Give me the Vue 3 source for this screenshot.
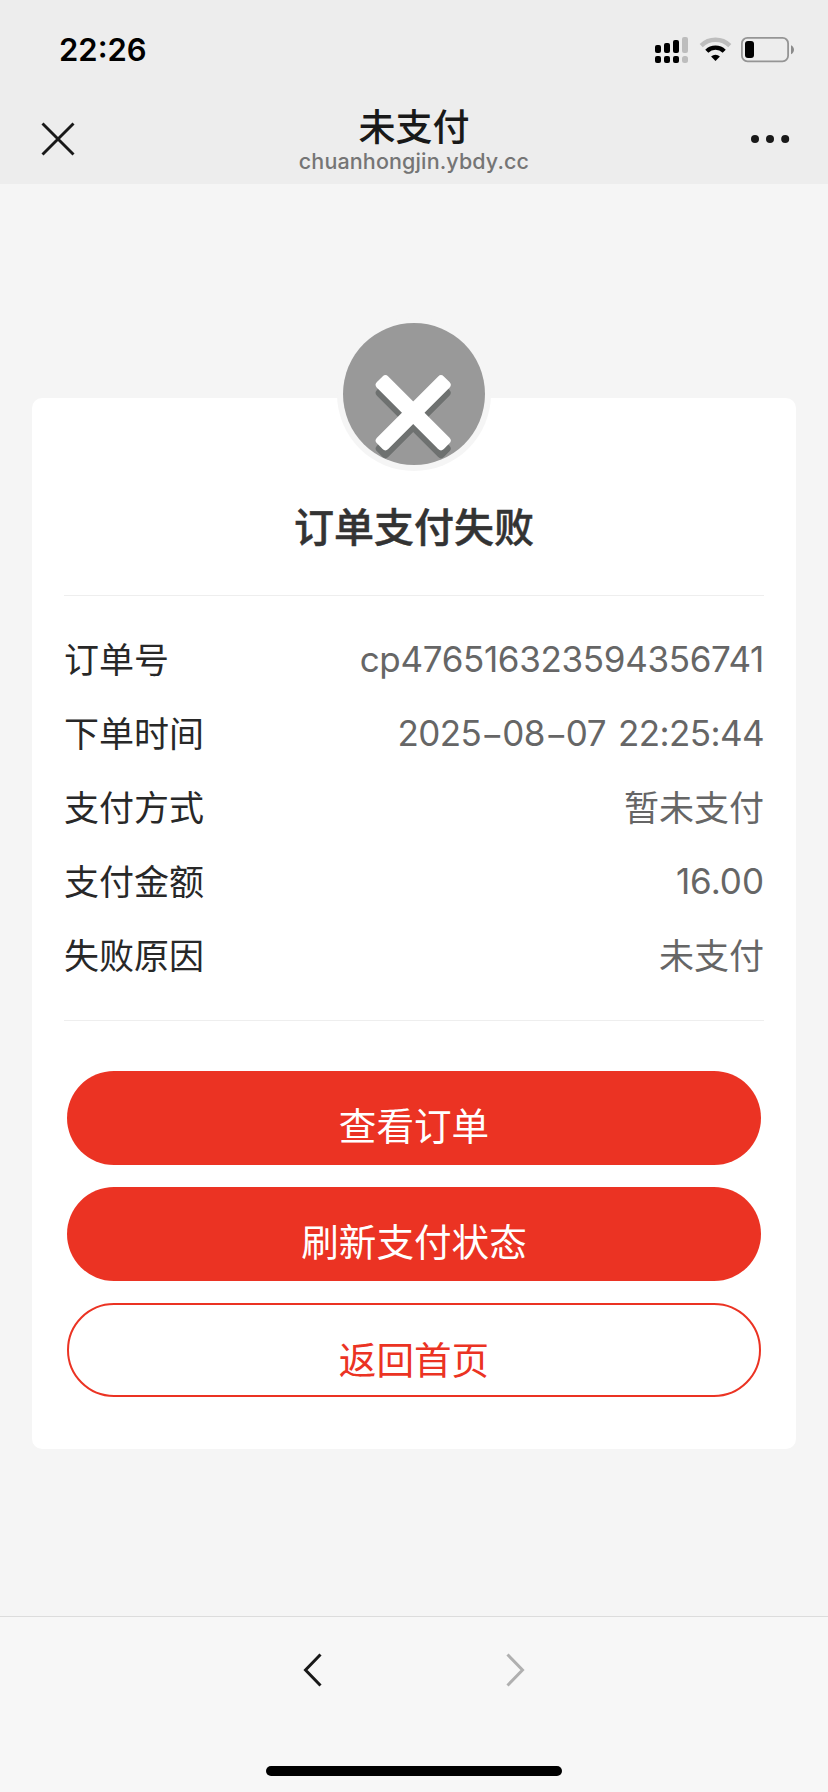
<script setup>
const rows = [
  { label: '订单号', value: ['cp476516323594356741'], kind: 'code' },
  { label: '下单时间', value: ['2025', '-', '08', '-', '07 22:25:44'], kind: 'date' },
  { label: '支付方式', value: ['暂未支付'], kind: 'text' },
  { label: '支付金额', value: ['16.00'], kind: 'amount' },
  { label: '失败原因', value: ['未支付'], kind: 'text' },
]
</script>

<template>
  <div class="screen">
    <header class="header">
      <div class="status">
        <span class="time">22:26</span>
        <svg class="indicators" width="140" height="28" viewBox="0 0 140 28">
          <g fill="#000">
            <rect x="0" y="9" width="6" height="8" rx="2" />
            <rect x="9" y="7" width="6" height="10" rx="2" />
            <rect x="18" y="4" width="6" height="13" rx="2" />
            <rect x="0" y="20" width="6" height="7" rx="2" />
            <rect x="9" y="20" width="6" height="7" rx="2" />
            <rect x="18" y="20" width="6" height="7" rx="2" />
          </g>
          <g fill="#bdbdbd">
            <rect x="27" y="1" width="6" height="16" rx="2" />
            <rect x="27" y="20" width="6" height="7" rx="2.5" />
          </g>
          <path d="M46.2 9.6a20.4 20.4 0 0 1 28.6 0" fill="none" stroke="#bdbdbd" stroke-width="4.4" />
          <path d="M51.8 15.2a12.4 12.4 0 0 1 17.4 0" fill="none" stroke="#000" stroke-width="4.4" />
          <path d="M60.5 25l-4.4-4.6a6.4 6.4 0 0 1 8.8 0z" fill="#000" />
          <rect x="86.9" y="1.9" width="46.2" height="23.4" rx="5.5" fill="none" stroke="#959595" stroke-width="1.8" />
          <rect x="90" y="5" width="9" height="17" rx="3" fill="#000" />
          <path d="M136 9.3c4 1.7 4 7.3 0 9z" fill="#8b8b8b" />
        </svg>
      </div>
      <div class="nav">
        <svg class="close" width="34" height="34" viewBox="0 0 34 34">
          <path d="M1.5 1.5l31 31M32.5 1.5l-31 31" stroke="#191919" stroke-width="2.9" />
        </svg>
        <div class="heading">
          <span class="title">未支付</span>
          <span class="host">chuanhongjin.ybdy.cc</span>
        </div>
        <svg class="more" width="40" height="10" viewBox="0 0 40 10">
          <g fill="#191919">
            <circle cx="5" cy="5" r="4" />
            <circle cx="20" cy="5" r="4" />
            <circle cx="35.2" cy="5" r="4" />
          </g>
        </svg>
      </div>
    </header>

    <main class="content">
      <section class="card">
        <svg class="badge" width="154" height="154" viewBox="0 0 154 154">
          <defs>
            <clipPath id="disc"><circle cx="77" cy="77" r="71" /></clipPath>
          </defs>
          <circle cx="77" cy="77" r="77" fill="#f5f5f5" />
          <circle cx="77" cy="77" r="71" fill="#999" />
          <g clip-path="url(#disc)">
            <g transform="translate(76.2 103.7)" fill="#6e7170">
              <rect x="-47.3" y="-8" width="94.6" height="16" rx="4" transform="rotate(45)" />
              <rect x="-47.3" y="-8" width="94.6" height="16" rx="4" transform="rotate(-45)" />
            </g>
            <g transform="translate(76.2 95.7)" fill="#fff">
              <rect x="-47.3" y="-8" width="94.6" height="16" rx="4" transform="rotate(45)" />
              <rect x="-47.3" y="-8" width="94.6" height="16" rx="4" transform="rotate(-45)" />
            </g>
          </g>
        </svg>
        <h1>订单支付失败</h1>
        <dl class="details">
          <div v-for="row in rows" :key="row.label" class="row">
            <dt>{{ row.label }}</dt>
            <dd :class="row.kind"><span v-for="(part, i) in row.value" :key="i" :class="{ dash: part === '-' }">{{ part }}</span></dd>
          </div>
        </dl>
        <div class="actions">
          <button type="button" class="btn">查看订单</button>
          <button type="button" class="btn">刷新支付状态</button>
          <button type="button" class="btn outline">返回首页</button>
        </div>
      </section>
    </main>

    <footer class="toolbar">
      <div class="arrows">
        <svg width="20" height="36" viewBox="0 0 20 36">
          <path d="M17.5 2.5L2.5 18l15 15.5" fill="none" stroke="#191919" stroke-width="3" />
        </svg>
        <svg width="20" height="36" viewBox="0 0 20 36">
          <path d="M2.5 2.5l15 15.5l-15 15.5" fill="none" stroke="#b0b0b0" stroke-width="3" />
        </svg>
      </div>
      <div class="home-bar"></div>
    </footer>
  </div>
</template>

<style>
body {
  margin: 0;
}
</style>

<style scoped>
.screen {
  width: 828px;
  height: 1792px;
  display: flex;
  flex-direction: column;
  background: #f5f5f5;
  font-family: Inter, "Noto Sans CJK SC", sans-serif;
  overflow: hidden;
}
.header {
  height: 184px;
  background: #ededed;
}
.status {
  height: 100px;
  box-sizing: border-box;
  padding: 0 33px 0 59px;
  display: flex;
  align-items: center;
  justify-content: space-between;
}
.time {
  font-size: 31px;
  font-weight: 600;
  line-height: 40px;
  color: #000;
}
.nav {
  height: 84px;
  box-sizing: border-box;
  padding: 0 38px 0 41px;
  display: grid;
  grid-template-columns: 60px 1fr 63px;
}
.close {
  margin-top: 22px;
}
.more {
  margin-top: 34px;
  justify-self: end;
}
.heading {
  display: flex;
  flex-direction: column;
  align-items: center;
}
.title {
  margin-top: 6px;
  font-size: 37px;
  font-weight: 500;
  line-height: 44px;
  color: #191919;
}
.host {
  margin-top: -2px;
  font-size: 21.5px;
  font-weight: 500;
  line-height: 26px;
  letter-spacing: 0.12px;
  color: #757575;
}
.content {
  flex: 1;
  padding: 214px 32px 0;
}
.card {
  position: relative;
  height: 1051px;
  box-sizing: border-box;
  padding: 103px 32px 0;
  border-radius: 10px;
  background: #fff;
}
.badge {
  position: absolute;
  top: -81px;
  left: 305px;
}
h1 {
  margin: 0;
  height: 94px;
  font-size: 40px;
  font-weight: 500;
  line-height: 54px;
  text-align: center;
  color: #333;
  -webkit-text-stroke: 0.5px #333;
}
.details {
  margin: 0;
  height: 398px;
  padding-top: 26px;
  border-top: 1px solid #eee;
  border-bottom: 1px solid #eee;
}
.row {
  height: 74px;
  display: flex;
  align-items: center;
  justify-content: space-between;
  font-size: 35px;
  line-height: 50px;
}
dt {
  padding-top: 2px;
  color: #282828;
}
dd {
  margin: 0;
  color: #666;
}
.text {
  padding-top: 2px;
}
.code {
  letter-spacing: -0.33px;
}
.date {
  letter-spacing: -0.6px;
  word-spacing: 3px;
}
.dash {
  display: inline-block;
  margin: 0 2.8px;
  transform: translateY(1px) scaleX(1.4);
}
.actions {
  padding: 50px 3px 0;
  display: flex;
  flex-direction: column;
  gap: 22px;
}
.btn {
  height: 94px;
  box-sizing: border-box;
  padding: 18px 0 0;
  border: 0;
  border-radius: 47px;
  background: #eb3323;
  color: #fff;
  font: inherit;
  font-size: 37.6px;
  line-height: 50px;
}
.outline {
  padding-top: 21px;
  border: 2px solid #eb3323;
  background: #fff;
  color: #eb3323;
}
.toolbar {
  height: 176px;
  box-sizing: border-box;
  border-top: 1px solid #dcdcdc;
  background: #f7f7f7;
  display: flex;
  flex-direction: column;
  align-items: center;
}
.arrows {
  margin-top: 35px;
  width: 222px;
  display: flex;
  justify-content: space-between;
}
.home-bar {
  margin-top: 78px;
  width: 296px;
  height: 10px;
  border-radius: 5px;
  background: #000;
}
</style>
